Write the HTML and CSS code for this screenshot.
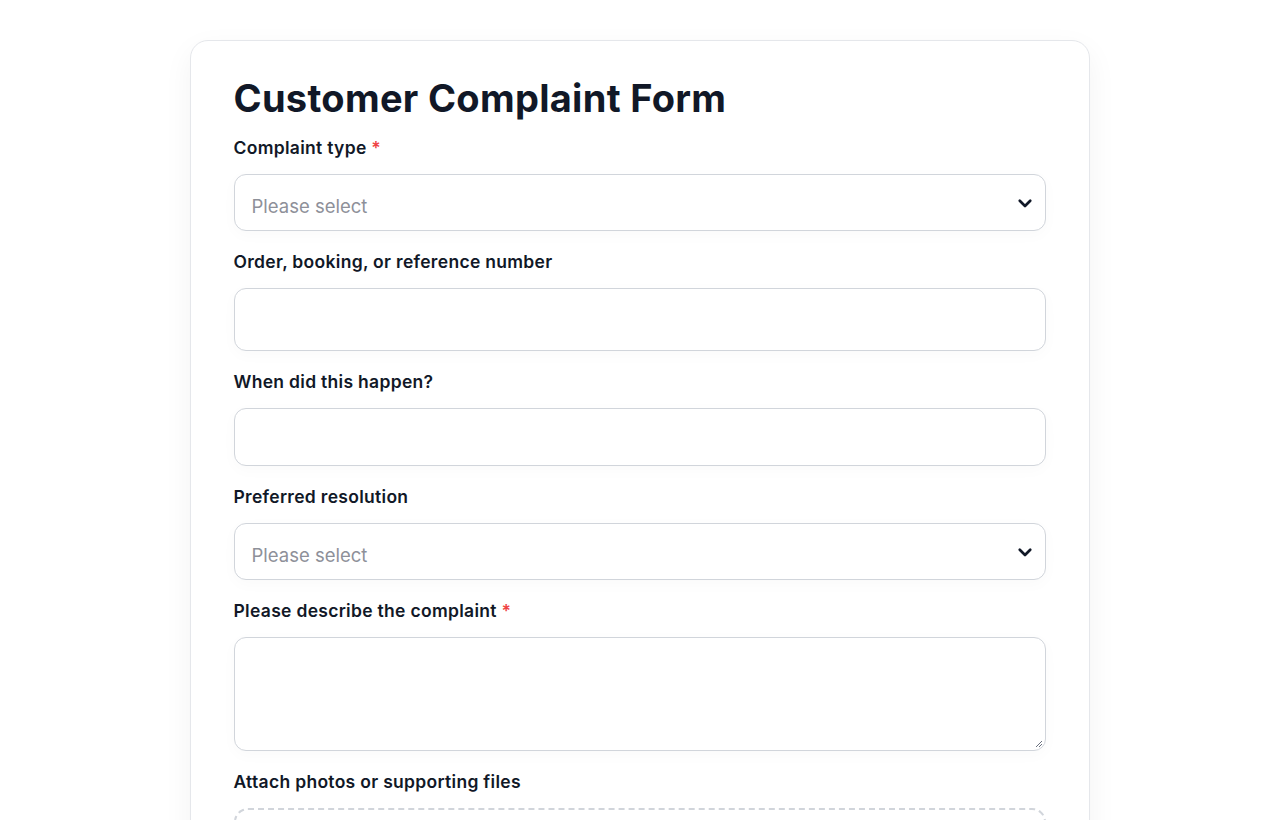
FILE: index.html
```html
<!DOCTYPE html>
<html lang="en">
<head>
<meta charset="utf-8">
<title>Customer Complaint Form</title>
<link rel="stylesheet" href="styles.css">
</head>
<body>
<main class="page">
  <form class="card">
    <h1 class="title">Customer Complaint Form</h1>

    <div class="group">
      <label class="label">Complaint type <span class="req">*</span></label>
      <div class="select h57">
        <span class="placeholder">Please select</span>
        <svg class="chev" viewBox="0 0 24 24" width="18" height="18"><path d="M5 9l7 7 7-7" fill="none" stroke="#111827" stroke-width="3.6" stroke-linecap="round" stroke-linejoin="round"/></svg>
      </div>
    </div>

    <div class="group">
      <label class="label">Order, booking, or reference number</label>
      <div class="input h63"></div>
    </div>

    <div class="group">
      <label class="label">When did this happen?</label>
      <div class="input h58"></div>
    </div>

    <div class="group">
      <label class="label">Preferred resolution</label>
      <div class="select h57">
        <span class="placeholder">Please select</span>
        <svg class="chev" viewBox="0 0 24 24" width="18" height="18"><path d="M5 9l7 7 7-7" fill="none" stroke="#111827" stroke-width="3.6" stroke-linecap="round" stroke-linejoin="round"/></svg>
      </div>
    </div>

    <div class="group">
      <label class="label">Please describe the complaint <span class="req">*</span></label>
      <div class="input textarea">
        <svg class="grip" viewBox="0 0 10 10" width="10" height="10"><path d="M9 3L3 9M9 6L6 9" stroke="#6b7280" stroke-width="1" fill="none"/></svg>
      </div>
    </div>

    <div class="group">
      <label class="label">Attach photos or supporting files</label>
      <div class="drop"></div>
    </div>
  </form>
</main>
</body>
</html>
```

FILE: styles.css
```css
* { box-sizing: border-box; }
html, body { margin: 0; padding: 0; background: #ffffff; }
body {
  font-family: Inter, "Noto Sans", "Liberation Sans", sans-serif;
  color: #111827;
}
.page {
  display: flex;
  justify-content: center;
  padding-top: 40px;
}
.card {
  width: 900px;
  margin-left: -1px;
  background: #fff;
  border: 1px solid #e5e7eb;
  border-radius: 18px;
  box-shadow: 0 10px 30px rgba(17, 24, 39, 0.05);
  padding: 34px 43px 40px 43px;
}
.title {
  margin: 0 0 16px 0;
  font-size: 38px;
  line-height: 46px;
  font-weight: 700;
  letter-spacing: 0.3px;
  color: #111827;
}
.group { margin-bottom: 20px; }
.label {
  display: block;
  font-size: 17.5px;
  line-height: 22px;
  font-weight: 600;
  letter-spacing: 0.3px;
  color: #111827;
  margin-bottom: 15px;
}
.req { color: #ef4444; }
.select, .input {
  position: relative;
  width: 100%;
  border: 1px solid #d1d5db;
  border-radius: 12px;
  background: #fff;
  box-shadow: 0 4px 16px rgba(17, 24, 39, 0.025);
}
.select {
  display: flex;
  align-items: center;
  justify-content: space-between;
  padding: 6px 11px 0 17px;
}
.h57 { height: 57px; }
.h58 { height: 58px; }
.h63 { height: 63px; }
.textarea { height: 114px; }
.placeholder {
  font-size: 18.5px;
  color: #8e9099;
}
.chev { margin-top: -6px; }
.grip {
  position: absolute;
  right: 2px;
  bottom: 2px;
}
.drop {
  height: 160px;
  border: 2px dashed #d1d5db;
  border-radius: 14px;
}
```
